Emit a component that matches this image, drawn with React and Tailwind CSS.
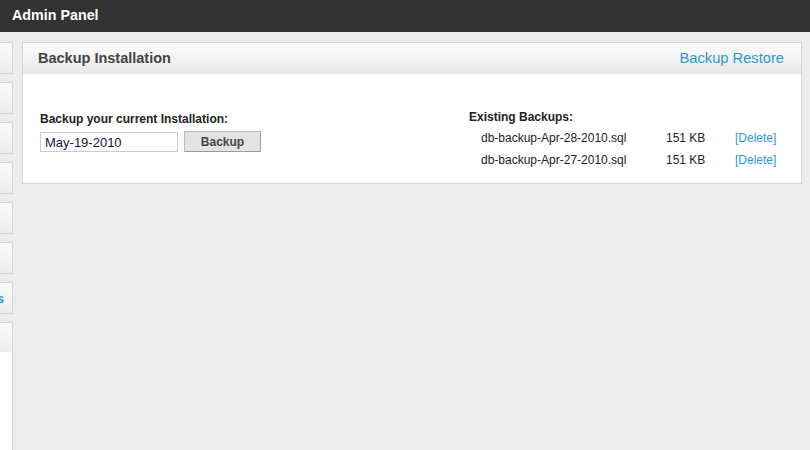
import React from 'react';

const backups = [
  { name: 'db-backup-Apr-28-2010.sql', size: '151 KB' },
  { name: 'db-backup-Apr-27-2010.sql', size: '151 KB' },
];

export default function App() {
  return (
    <div className="h-[450px] w-[810px] overflow-hidden bg-[#ebeceb] font-['Liberation_Sans',Arial,sans-serif]">
      {/* Top bar */}
      <div className="h-8 bg-[#333333] px-3 pt-[5px] text-[14.3px] font-bold text-white">Admin Panel</div>

      <div className="flex pt-[10px]">
        {/* Sidebar (scrolled out of view) */}
        <div className="w-[13px] shrink-0 overflow-hidden">
          <div className="-ml-[187px] flex w-[200px] flex-col gap-2">
            {[0, 1, 2, 3, 4, 5].map((i) => (
              <div key={i} className="h-8 border border-[#d6d6d6] bg-gradient-to-b from-[#fbfbfb] to-[#ececec]" />
            ))}
            <div className="relative h-8 border border-[#d6d6d6] bg-gradient-to-b from-[#fbfbfb] to-[#ececec]">
              <span className="absolute right-[8px] top-[7px] text-[12px] font-bold text-[#2a90e6]">s</span>
            </div>
            <div className="h-[140px] border border-[#d6d6d6] bg-white">
              <div className="h-[29px] bg-gradient-to-b from-[#fbfbfb] to-[#ececec]" />
            </div>
          </div>
        </div>

        {/* Main panel */}
        <div className="ml-[9px] w-[780px]">
          <div className="border border-[#d6d6d6] bg-white">
            <div className="flex h-[31px] items-center justify-between bg-gradient-to-b from-[#fdfdfd] to-[#e9e9e9] pl-[15px] pr-[17px]">
              <span className="text-[14.5px] font-bold text-[#444]">Backup Installation</span>
              <a className="text-[14.7px] text-[#2a9ad0]">Backup Restore</a>
            </div>
            <div className="flex h-[109px] pl-[17px] pt-[36px]">
              <div className="w-[429px]">
                <div className="text-[12px] font-bold text-[#222]">Backup your current Installation:</div>
                <div className="mt-[4px] flex gap-[6px]">
                  <input
                    defaultValue="May-19-2010"
                    className="h-[20px] w-[138px] border border-[#cccccc] px-[4px] text-[13px] text-[#141446] outline-none"
                  />
                  <button className="-mt-[1px] h-[21px] w-[77px] border border-[#bbbbbb] border-b-[#999] border-r-[#999] bg-[#e3e3e3] text-[12px] font-bold text-[#444]">
                    Backup
                  </button>
                </div>
              </div>
              <div>
                <div className="-mt-[2px] text-[12px] font-bold text-[#222]">Existing Backups:</div>
                <div className="mt-[3px] flex flex-col gap-[4px] pl-3 text-[12px] text-[#222]">
                  {backups.map((b) => (
                    <div key={b.name} className="flex">
                      <span className="w-[185px]">{b.name}</span>
                      <span className="w-[69px]">{b.size}</span>
                      <a className="text-[#2a9ad0]">[Delete]</a>
                    </div>
                  ))}
                </div>
              </div>
            </div>
          </div>
        </div>
      </div>
    </div>
  );
}
